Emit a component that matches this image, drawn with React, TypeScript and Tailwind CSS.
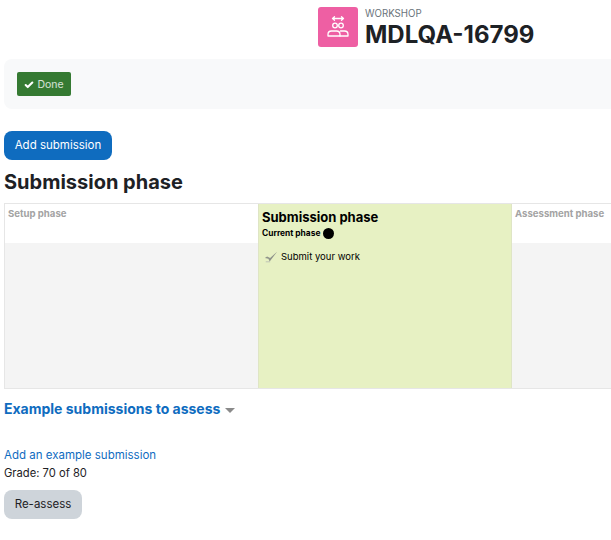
import { Check } from "lucide-react";

function WorkshopIcon() {
  return (
    <svg viewBox="0 0 24 24" className="h-[24px] w-[24px]" fill="none" stroke="white" strokeWidth="1.3" strokeLinecap="round" strokeLinejoin="round">
      <path d="M6.500 3.500h11M8.500 1.700l-2 1.800 2 1.800M15.500 1.700l2 1.800-2 1.800" />
      <circle cx="9" cy="10.500" r="2.300" />
      <circle cx="15" cy="10.500" r="2.300" />
      <path d="M2 21v-1.500c0-2 1.500-3.500 3.500-3.500h5c2 0 3.500 1.500 3.500 3.500V21z" />
      <path d="M14.500 16h4c2 0 3.500 1.500 3.500 3.500V21h-8" />
    </svg>
  );
}

function PhaseCheck() {
  return (
    <svg viewBox="0 0 16 12" className="h-[12px] w-[14px]">
      <path d="M1 7 5 8 6.500 11 15 0 7 7 3.500 5.500z" fill="#8f948a" />
      <path d="M2 11.500h5" stroke="#b9bdb2" strokeWidth="1" />
    </svg>
  );
}

export default function App() {
  return (
    <div className="h-[540px] w-[611px] overflow-hidden bg-white text-[#1d2125] font-['Inter',sans-serif]">
      <div className="flex h-[59px] items-start pl-[318px] pt-[7px]">
        <div className="flex h-[40px] w-[40px] items-center justify-center rounded-[3px] bg-[#ee5fa3]">
          <WorkshopIcon />
        </div>
        <div className="ml-[7px]">
          <div className="mt-[1px] text-[9.7px] leading-[12px] text-[#6a737b]">WORKSHOP</div>
          <div className="mt-[1px] text-[24px] font-bold leading-[28px]">MDLQA-16799</div>
        </div>
      </div>

      <div className="ml-[4px] w-[640px] rounded-[8px] bg-[#f8f9fa] px-[13px] py-[13px]">
        <div className="flex h-[24px] w-[54px] items-center justify-center gap-[3px] rounded-[2px] bg-[#357a32] pt-[1px] text-[10.5px] text-white/80">
          <Check size={10} strokeWidth={5} className="text-white" />
          Done
        </div>
      </div>

      <button className="ml-[4px] mt-[22px] block h-[29px] w-[108px] rounded-[8px] bg-[#0f6cbf] pt-[1px] text-[11.5px] text-white">
        Add submission
      </button>

      <h2 className="ml-[4px] mt-[9px] text-[20px] font-bold leading-[26px]">Submission phase</h2>

      <div className="ml-[4px] mt-[8px] flex h-[186px] w-[762px] border-y border-[#e6e6e6] border-l">
        <div className="flex w-[253px] flex-col">
          <div className="h-[39px] bg-white px-[3px] py-[4px] text-[9.600px] font-bold leading-[12px] text-[#a3a3a3]">Setup phase</div>
          <div className="flex-1 bg-[#f4f4f4]" />
        </div>
        <div className="w-[254px] border-x border-[#dfe5c5] bg-[#e7f1c3] px-[3px] pt-[5px] text-black">
          <div className="text-[13px] font-bold leading-[16px]">Submission phase</div>
          <div className="mt-[2px] flex items-center gap-[3px] text-[8.400px] font-bold leading-[12px]">
            Current phase
            <span className="h-[11px] w-[11px] rounded-full bg-black" />
          </div>
          <div className="mt-[12px] flex items-center gap-[3px] pl-[2px] text-[9.500px] leading-[12px]">
            <PhaseCheck />
            Submit your work
          </div>
        </div>
        <div className="flex w-[254px] flex-col">
          <div className="h-[39px] bg-white px-[3px] py-[4px] text-[9.600px] font-bold leading-[12px] text-[#a3a3a3]">Assessment phase</div>
          <div className="flex-1 bg-[#f4f4f4]" />
        </div>
      </div>

      <div className="ml-[4px] mt-[10px] flex items-center gap-[5px] text-[14px] font-bold leading-[20px] text-[#0f6cbf]">
        Example submissions to assess
        <span className="mt-[2px] h-0 w-0 border-x-[5px] border-t-[5px] border-x-transparent border-t-[#8a8a8a]" />
      </div>

      <div className="ml-[4px] mt-[27px] text-[11.500px] leading-[18px] text-[#0f6cbf]">Add an example submission</div>
      <div className="ml-[4px] text-[11.200px] leading-[18px]">Grade: 70 of 80</div>

      <button className="ml-[4px] mt-[8px] block h-[29px] w-[78px] rounded-[8px] bg-[#ced4da] pt-[1px] text-[11.500px]">
        Re-assess
      </button>
    </div>
  );
}
